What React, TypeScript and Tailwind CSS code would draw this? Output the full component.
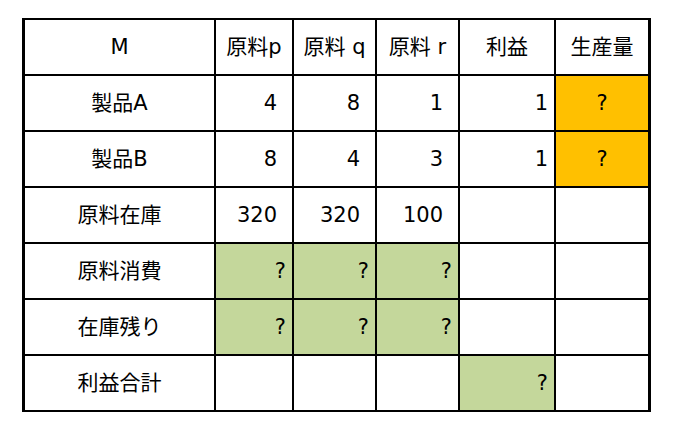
type Cell = {
   text?: string;
   align?: "center" | "right" | "num";
   bg?: string;
};

const ORANGE = "bg-[#ffc000]";
const GREEN = "bg-[#c4d79b]";

const rows: Cell[][] = [
   [
      {text: "M", align: "center"},
      {text: "原料p", align: "center"},
      {text: "原料 q", align: "center"},
      {text: "原料 r", align: "center"},
      {text: "利益", align: "center"},
      {text: "生産量", align: "center"},
   ],
   [
      {text: "製品A", align: "center"},
      {text: "4", align: "num"},
      {text: "8", align: "num"},
      {text: "1", align: "num"},
      {text: "1", align: "right"},
      {text: "?", align: "center", bg: ORANGE},
   ],
   [
      {text: "製品B", align: "center"},
      {text: "8", align: "num"},
      {text: "4", align: "num"},
      {text: "3", align: "num"},
      {text: "1", align: "right"},
      {text: "?", align: "center", bg: ORANGE},
   ],
   [
      {text: "原料在庫", align: "center"},
      {text: "320", align: "num"},
      {text: "320", align: "num"},
      {text: "100", align: "num"},
      {},
      {},
   ],
   [
      {text: "原料消費", align: "center"},
      {text: "?", align: "right", bg: GREEN},
      {text: "?", align: "right", bg: GREEN},
      {text: "?", align: "right", bg: GREEN},
      {},
      {},
   ],
   [
      {text: "在庫残り", align: "center"},
      {text: "?", align: "right", bg: GREEN},
      {text: "?", align: "right", bg: GREEN},
      {text: "?", align: "right", bg: GREEN},
      {},
      {},
   ],
   [
      {text: "利益合計", align: "center"},
      {},
      {},
      {},
      {text: "?", align: "right", bg: GREEN},
      {},
   ],
];

function alignClass(align?: Cell["align"]) {
   if (align === "center") return "justify-center";
   if (align === "num") return "justify-end pr-[15px]";
   return "justify-end pr-[6px]";
}

export default function App() {
   return (
      <div className="w-[679px] h-[434px] bg-white pl-[22px] pt-[18px]"
           style={{fontFamily: '"DejaVu Sans", "Noto Sans CJK JP", sans-serif'}}>
         {/* Table */}
         <div className="inline-block bg-black px-[3px] py-[2px]">
            <div className="grid grid-cols-[189px_76px_81px_81px_94px_92px] grid-rows-[repeat(7,54px)] gap-[2px]">
               {rows.map((row, r) =>
                  row.map((cell, c) => (
                     <div key={`${r}-${c}`}
                          className={`flex items-center text-[21px] leading-none text-black ${cell.bg ?? "bg-white"} ${alignClass(cell.align)}`}>
                        {cell.text}
                     </div>
                  ))
               )}
            </div>
         </div>
      </div>
   );
}
